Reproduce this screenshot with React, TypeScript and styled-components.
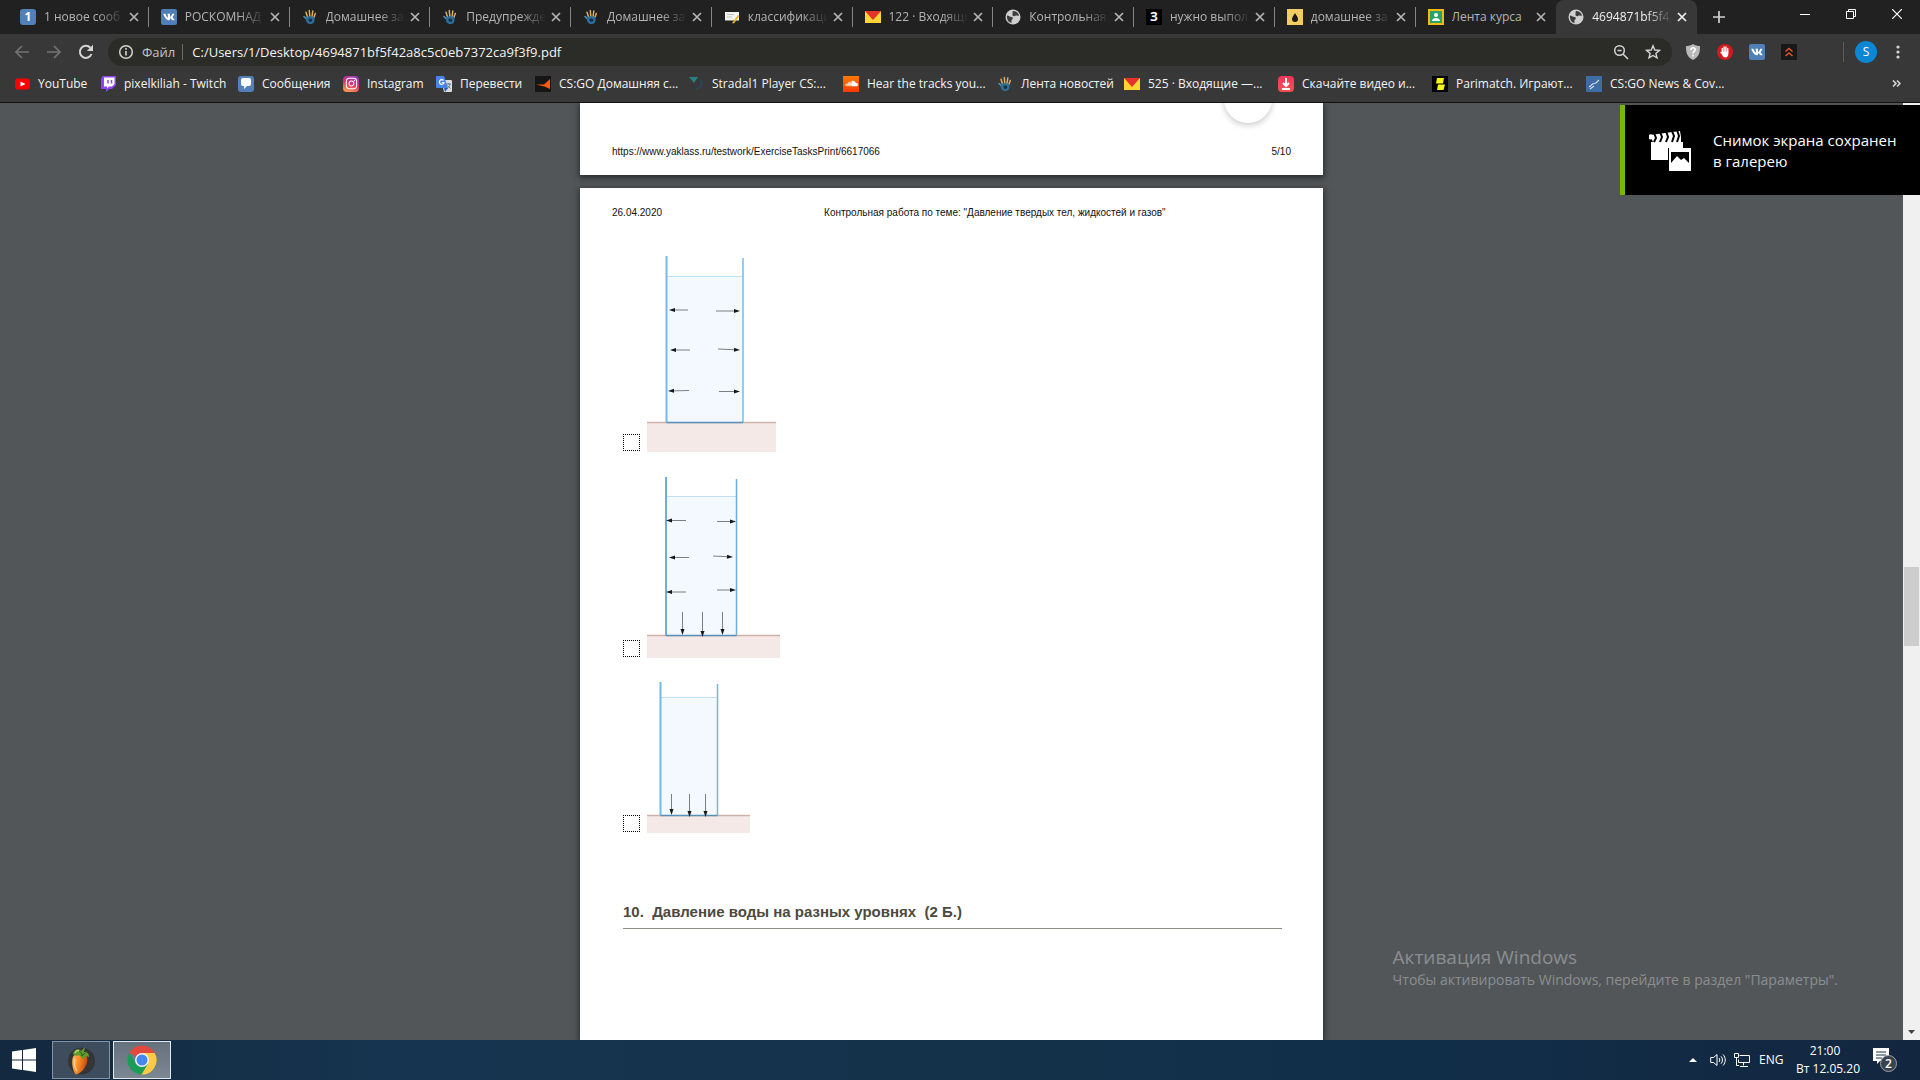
import React from "react";
import styled, { createGlobalStyle, css } from "styled-components";
import { FaVk, FaSoundcloud, FaInstagram } from "react-icons/fa";

const ui = `"Open Sans", "Noto Sans", sans-serif`;
const doc = `"Liberation Sans", Arial, sans-serif`;

const Global = createGlobalStyle`
  *, *::before, *::after { box-sizing: border-box; }
  html, body { margin: 0; height: 100%; }
  body { overflow: hidden; font-family: ${ui}; }
  button { border: 0; padding: 0; background: none; color: inherit; font: inherit; }
  svg { display: block; flex: none; }
`;

const Screen = styled.div`
  display: flex;
  flex-direction: column;
  height: 100vh;
  background: #525659;
`;

/* ---------- tab strip ---------- */
const TabStrip = styled.header`
  display: flex;
  flex: none;
  height: 34px;
  padding-left: 8px;
  background: #212121;
`;
const Tabs = styled.nav`
  display: flex;
  flex: 1;
  min-width: 0;
`;
const TabItem = styled.div<{ $active?: boolean; $line?: boolean }>`
  display: flex;
  flex: 1 1 0;
  align-items: center;
  min-width: 0;
  max-width: 240px;
  padding: 6px 7px 6px 12px;
  position: relative;
  color: ${(p) => (p.$active ? "#f1f1f1" : "#b4b4b4")};
  ${(p) =>
    p.$active &&
    css`
      background: #383838;
      border-radius: 8px 8px 0 0;
    `}
  ${(p) =>
    p.$line &&
    css`
      &::after {
        content: "";
        position: absolute;
        right: 0;
        top: 7px;
        width: 1px;
        height: 20px;
        background: #858585;
      }
    `}
`;
const TabTitle = styled.button<{ $fade: boolean }>`
  flex: 1;
  min-width: 0;
  margin: 0 2px 0 8px;
  overflow: hidden;
  font-size: 12px;
  line-height: 18px;
  text-align: left;
  white-space: nowrap;
  ${(p) =>
    p.$fade &&
    css`
      mask-image: linear-gradient(to right, #000 calc(100% - 26px), transparent);
    `}
`;
const IconButton = styled.button<{ $w: number; $h: number }>`
  display: flex;
  flex: none;
  align-items: center;
  justify-content: center;
  width: ${(p) => p.$w}px;
  height: ${(p) => p.$h}px;
`;
const NewTab = styled.div`
  display: flex;
  align-items: center;
  padding: 0 49px 0 8px;
  color: #d0d0d0;
`;
const WindowControls = styled.div`
  display: flex;
  color: #fff;
`;

/* ---------- toolbar ---------- */
const Toolbar = styled.div`
  display: flex;
  flex: none;
  align-items: center;
  height: 36px;
  padding: 0 6px;
  background: #383838;
  color: #d5d5d5;
`;
const Omnibox = styled.form`
  display: flex;
  flex: 1;
  align-items: center;
  height: 28px;
  margin: 0 5px 0 6px;
  padding: 0 3px 0 10px;
  border-radius: 14px;
  background: #2b2b27;
  font-size: 13px;
`;
const Scheme = styled.label`
  margin: 0 7px 0 8px;
  padding-right: 7px;
  border-right: 1px solid #6a6a68;
  line-height: 16px;
  color: #c4c4c4;
`;
const Address = styled.input`
  flex: 1;
  min-width: 0;
  padding: 0 0 0 2px;
  border: 0;
  outline: 0;
  background: transparent;
  color: #f4f4f4;
  font: 13px/18px ${ui};
`;
const Extensions = styled.div`
  display: flex;
  align-items: center;
  padding-right: 38px;
`;
const Profile = styled.div`
  display: flex;
  align-items: center;
  padding-left: 6px;
  border-left: 1px solid #5b5b5b;
`;
const Avatar = styled.span`
  width: 22px;
  height: 22px;
  border-radius: 50%;
  background: #0b87d3;
  color: #fff;
  font-size: 12px;
  line-height: 22px;
  text-align: center;
`;

/* ---------- bookmarks ---------- */
const Bookmarks = styled.nav`
  display: flex;
  flex: none;
  align-items: center;
  height: 33px;
  padding: 0 14px 5px;
  background: #383838;
  border-bottom: 1px solid #111;
`;
const Bookmark = styled.a<{ $w: number }>`
  display: flex;
  flex: 0 1 ${(p) => p.$w}px;
  align-items: center;
  gap: 8px;
  min-width: 0;
  color: #f4f4f4;
  font-size: 12px;
  line-height: 18px;
  text-decoration: none;
  white-space: nowrap;
`;
const Overflow = styled(IconButton)`
  margin-left: auto;
  color: #ddd;
`;

/* ---------- viewer ---------- */
const Viewer = styled.main`
  display: flex;
  flex: 1;
  min-height: 0;
  position: relative;
`;
const Canvas = styled.div`
  display: flex;
  flex: 1;
  flex-direction: column;
  align-items: center;
  gap: 13px;
  overflow: hidden;
  position: relative;
`;
const Page = styled.section<{ $grow?: boolean }>`
  display: flex;
  flex-direction: column;
  flex: ${(p) => (p.$grow ? "1" : "none")};
  width: 743px;
  padding: ${(p) => (p.$grow ? "19px 32px 0" : "43px 32px 18px")};
  background: #fff;
  box-shadow: 0 2px 6px 1px rgba(0, 0, 0, 0.5);
  color: #111;
  font-family: ${doc};
`;
const Running = styled.div`
  display: flex;
  justify-content: space-between;
  font-size: 10px;
  line-height: 11px;
`;
const RunningTitle = styled.span`
  flex: 1;
  padding-left: 162px;
`;
const Fab = styled.button`
  position: absolute;
  top: -28px;
  left: calc(50% + 272px);
  width: 48px;
  height: 48px;
  border-radius: 50%;
  background: #fff;
  box-shadow: 0 2px 6px rgba(0, 0, 0, 0.22);
`;
const Answers = styled.div`
  display: flex;
  flex-direction: column;
  gap: 22px;
  padding: 36px 0 0 11px;
`;
const Answer = styled.label`
  display: flex;
  align-items: flex-end;
  gap: 7px;
`;
const Tick = styled.input`
  appearance: none;
  width: 17px;
  height: 17px;
  margin: 0 0 1px;
  border: 1px dotted #000;
  background: #fff;
`;
const Question = styled.h2`
  margin: 70px 9px 0 11px;
  padding-bottom: 7px;
  border-bottom: 1px solid #8e8e88;
  color: #4c4a3e;
  font-size: 15px;
  line-height: 18px;
  white-space: pre;
`;
const Watermark = styled.aside`
  position: absolute;
  right: 65px;
  bottom: 50px;
  color: #8b8e90;
`;
const WatermarkTitle = styled.div`
  font-size: 19px;
  line-height: 26px;
`;
const WatermarkText = styled.div`
  font-size: 14px;
  line-height: 20px;
`;
const Toast = styled.aside`
  display: flex;
  align-items: center;
  gap: 22px;
  position: absolute;
  top: 2px;
  right: 0;
  width: 300px;
  height: 90px;
  padding-left: 24px;
  border-left: 5px solid #76b900;
  background: #000;
  color: #fff;
  font-size: 15px;
  line-height: 21px;
  white-space: nowrap;
`;
const ToastText = styled.span`
  padding-top: 2px;
`;
const Scrollbar = styled.div`
  display: flex;
  flex-direction: column;
  justify-content: space-between;
  align-items: center;
  width: 17px;
  background: #f0f0f0;
  color: #444;
`;
const Thumb = styled.div`
  width: 15px;
  height: 79px;
  margin-top: 86px;
  background: #cdcdcd;
`;

/* ---------- taskbar ---------- */
const Taskbar = styled.footer`
  display: flex;
  flex: none;
  align-items: center;
  height: 40px;
  background: linear-gradient(to right, #12293f, #16344f 20%, #15324b 50%, #112e49 75%, #13263f);
  color: #fff;
`;
const StartButton = styled(IconButton)`
  margin-right: 4px;
`;
const TaskButton = styled(IconButton)<{ $on?: boolean }>`
  margin-right: 3px;
  border: 1px solid ${(p) => (p.$on ? "#e4e8ec" : "#8394a5")};
  background: ${(p) => (p.$on ? "linear-gradient(#65727e, #7b8791)" : "#3d4d5d")};
`;
const Tray = styled.div`
  display: flex;
  align-items: center;
  margin-left: auto;
  padding-right: 23px;
  font-size: 12px;
  line-height: 18px;
`;
const Language = styled.span`
  width: 42px;
  padding-left: 5px;
`;
const Clock = styled.time`
  width: 58px;
  margin-right: 19px;
  text-align: center;
  white-space: nowrap;
`;

/* ---------- icons ---------- */
const Tile = styled.span<{ $bg: string; $r?: number; $fs?: number }>`
  display: flex;
  flex: none;
  align-items: center;
  justify-content: center;
  width: 16px;
  height: 16px;
  border-radius: ${(p) => p.$r ?? 0}px;
  background: ${(p) => p.$bg};
  color: #fff;
  font-size: ${(p) => p.$fs ?? 12}px;
  font-weight: 700;
  line-height: 16px;
`;

const Svg = ({ s = 16, children }: { s?: number; children: React.ReactNode }) => (
  <svg width={s} height={s} viewBox={`0 0 ${s} ${s}`} fill="none" aria-hidden="true">
    {children}
  </svg>
);

const Hand = () => (
  <Svg>
    <path d="M5.500 8 4 3.200M7.800 7.500 7.300 1.500M10 7.500 10.800 2M11.800 8.500 13.300 4.500" stroke="#dcae68" strokeWidth="1.500" strokeLinecap="round" />
    <path d="M4.500 10 2 7.500" stroke="#4c93bd" strokeWidth="1.600" strokeLinecap="round" />
    <path d="M4.300 8C6 6.800 10.500 6.800 12.300 8.500c.8 2.500.2 4.800-1.600 6C8.500 15.800 5.500 15 4.300 12.500 3.700 11 3.600 9.500 4.300 8Z" fill="#2e6c99" />
    <path d="M6.200 10.500c1-1.500 3.600-1.300 4 .3.300 1.600-1.400 2.500-2.600 2.200" fill="#16324a" />
  </Svg>
);
const Mail = () => (
  <Svg>
    <path d="M0 2h16v12H0z" fill="#ffd633" />
    <path d="M0 2h16L8 11Z" fill="#e5322d" />
  </Svg>
);
const Globe = () => (
  <Svg>
    <circle cx="8" cy="8" r="7.500" fill="#cfcfcf" />
    <path d="M2 6.500c2 0 2.500 1.500 4.500 1.500s1.500 2.500 0 3v3C3.500 13.500 1.500 10.500 2 6.500ZM8 2c3-.5 5.500 2 6 4.500-1.500.8-2.500-.5-4 .5S7 6.500 7.500 5 7 3 8 2Z" fill="#3c3c3c" />
  </Svg>
);
const Note = () => (
  <Svg>
    <path d="M1 3h14v8.500H1z" fill="#f3f3f0" />
    <path d="M3 5.500h7M3 8h5" stroke="#c5c5c0" />
    <path d="m8 14 6-8 1.500 1-5.500 7.500Z" fill="#e6b422" />
  </Svg>
);
const Drop = () => (
  <Tile $bg="#f4cc62">
    <svg width="6" height="9" viewBox="0 0 6 9"><path d="M3 0C4 2 6 4 6 6a3 3 0 0 1-6 0C0 4 2 2 3 0Z" fill="#1a1a1a" /></svg>
  </Tile>
);
const Classroom = () => (
  <Svg>
    <path d="M0 0h16v16H0z" fill="#f5ba14" />
    <path d="M2 2h12v12H2z" fill="#25a465" />
    <circle cx="8" cy="6" r="2" fill="#fff" />
    <path d="M4 12c0-4 8-4 8 0Z" fill="#fff" />
  </Svg>
);
const YouTube = () => (
  <Svg>
    <rect x="1" y="2.500" width="15" height="11" rx="3" fill="#f00" />
    <path d="m6.500 5.500 5 2.500-5 2.500Z" fill="#fff" />
  </Svg>
);
const Twitch = () => (
  <Svg>
    <path d="M2.500 0H16v9l-4 4H9l-3 3v-3H1V3Z" fill="#8b44f7" />
    <path d="M4 1.500h10.500V8L12 10.500H9L7 12.500v-2H4Z" fill="#fff" />
    <path d="M8 4v3.500M11.500 4v3.500" stroke="#8b44f7" strokeWidth="1.500" />
  </Svg>
);
const Chat = () => (
  <Tile $bg="#5181b8" $r={3}>
    <svg width="10" height="11" viewBox="0 0 10 11"><path d="M2 0h6a2 2 0 0 1 2 2v4a2 2 0 0 1-2 2H6l-3 3V8H2a2 2 0 0 1-2-2V2a2 2 0 0 1 2-2Z" fill="#fff" /></svg>
  </Tile>
);
const Translate = () => (
  <Svg>
    <path d="M5 4h10a1 1 0 0 1 1 1v10a1 1 0 0 1-1 1H8Z" fill="#dcdcdc" />
    <path d="M0 1a1 1 0 0 1 1-1h7l4 12H1a1 1 0 0 1-1-1Z" fill="#4a86e8" />
    <path d="M7.500 4.500A2.300 2.300 0 1 0 8 6.500H5.800" stroke="#fff" strokeWidth="1.200" />
    <path d="M10 8h5M12.500 7v1M14 8c-.5 2-1.500 3.500-3 4.500M11.500 9.500l3 3" stroke="#607d8b" />
    <path d="m8 12 4 0-3 4Z" fill="#2b5fc0" />
  </Svg>
);
const Faceit = () => (
  <Tile $bg="#161616">
    <svg width="14" height="10" viewBox="0 0 14 10"><path d="M0 5.500h8L14 0v10L8.500 7.500Z" fill="#ff5a0a" /></svg>
  </Tile>
);
const Stradal = () => (
  <Svg>
    <path d="M1 1h9L6 7Z" fill="#238285" />
    <path d="M13 4c2 4 0 8-5 9" stroke="#29475a" strokeWidth="2" />
  </Svg>
);
const Download = () => (
  <Tile $bg="linear-gradient(#f6335a, #f25252)" $r={4}>
    <svg width="10" height="12" viewBox="0 0 10 12" fill="none" stroke="#fff" strokeWidth="2"><path d="M5 0v7M2 5l3 3 3-3M1 11h8" /></svg>
  </Tile>
);
const Pari = () => (
  <Tile $bg="#000">
    <svg width="12" height="12" viewBox="0 0 12 12"><path d="M3 0h7L9 5.500H2ZM4 6.500h7L9.500 12H3Z" fill="#f6f41c" /></svg>
  </Tile>
);
const News = () => (
  <Tile $bg="#3e6ca5">
    <svg width="12" height="12" viewBox="0 0 12 12" fill="none" stroke="#d6e2ef"><path d="M1 8.500C3 9.500 3 5.500 6 5.500S9 3.500 11 2M2 11l4-3" strokeWidth="1.100" /></svg>
  </Tile>
);
const VkTile = () => (
  <Tile $bg="#4f7fb5" $r={2}>
    <FaVk size={12} />
  </Tile>
);
const Chrome = () => (
  <Svg s={30}>
    <path d="M15 15 2.400 7.800A14.500 14.500 0 0 1 27.700 8H15Z" fill="#e04a3f" />
    <path d="M15 8h12.700A14.500 14.500 0 0 1 14.400 29.500L21 18.500Z" fill="#fccb45" />
    <path d="M2.400 7.800A14.500 14.500 0 0 0 14.400 29.500L20.700 19 15 21 9 18.500Z" fill="#1b9d57" />
    <circle cx="15" cy="15" r="7" fill="#f1f1f1" />
    <circle cx="15" cy="15" r="5.500" fill="#4688f1" />
  </Svg>
);
const FruityLoops = () => (
  <Svg s={30}>
    <defs>
      <linearGradient id="fruit" x1="0" y1="0" x2="1" y2="0.300">
        <stop offset="0" stopColor="#ffc061" />
        <stop offset="0.600" stopColor="#f2801f" />
        <stop offset="1" stopColor="#c34c10" />
      </linearGradient>
    </defs>
    <circle cx="15.500" cy="16" r="13.500" fill="#343536" />
    <path d="M7 12c1-4 11-4 14 0 2 6-4 16-11 17.500C7 27 5 17 7 12Z" fill="url(#fruit)" />
    <path d="M9 14c-1 4 0 9 2 12" stroke="#ffe0a8" strokeWidth="1.500" opacity=".7" />
    <path d="M7 9c1-5 6-6 8-3l4-4-1 5c3 0 5 1 5 5-3-1-5 0-6 2-2-1-2-3-4-4-2 1-5 1-6-1Z" fill="#5f9a2d" />
    <path d="M9 8c1-2 3-3 4-2" stroke="#b9d873" strokeWidth="1.500" />
    <path d="M13 6c2 1 3 2 3 5l3-3" stroke="#2c5d18" />
  </Svg>
);
const Close = () => (
  <Svg s={10}><path d="m1 1 8 8M9 1 1 9" stroke="currentColor" strokeWidth="1.700" /></Svg>
);

/* ---------- vessel drawings ---------- */
type Arrow = [number, number, number, number];
type Vessel = {
  w: number; h: number; floor: number;
  left: number; right: number; topL: number; topR: number; water: number;
  wall: string; arrows: Arrow[];
};
const vessels: Vessel[] = [
  {
    w: 129, h: 198, floor: 168.5, left: 19.5, right: 96, topL: 2, topR: 4, water: 22, wall: "#72bbf0",
    arrows: [[41, 56, 22, 56], [69, 57, 93, 57], [43, 96, 23, 96], [71, 95, 93, 96], [42, 136.5, 21, 137], [72, 137.500, 93, 137.500]],
  },
  {
    w: 133, h: 184, floor: 161.5, left: 19, right: 89.5, topL: 3, topR: 5, water: 22, wall: "#69b0dc",
    arrows: [[39, 46.500, 19, 46.500], [70, 47.500, 89, 47.500], [42, 83.500, 22, 83.500], [66, 82, 86, 83], [39, 118, 19, 118], [70, 116, 89, 116], [35.500, 138, 35.500, 161], [55.500, 138, 55.500, 163], [75.500, 138, 75.500, 161]],
  },
  {
    w: 103, h: 153, floor: 135.5, left: 13.5, right: 70.5, topL: 2, topR: 4, water: 17, wall: "#6cbbe2",
    arrows: [[24.500, 114, 24.500, 135], [42.500, 114, 42.500, 137], [58.500, 114, 58.500, 137]],
  },
];
const ArrowLine = ({ a: [x1, y1, x2, y2] }: { a: Arrow }) => {
  const d = Math.hypot(x2 - x1, y2 - y1);
  const ux = (x2 - x1) / d;
  const uy = (y2 - y1) / d;
  const bx = x2 - ux * 6;
  const by = y2 - uy * 6;
  return (
    <g>
      <path d={`M${x1} ${y1}L${bx} ${by}`} stroke="#7c7f82" />
      <path d={`M${x2} ${y2}L${bx - uy * 2} ${by + ux * 2}L${bx + uy * 2} ${by - ux * 2}Z`} fill="#16191c" />
    </g>
  );
};
const VesselDrawing = ({ v }: { v: Vessel }) => (
  <svg width={v.w} height={v.h} viewBox={`0 0 ${v.w} ${v.h}`} fill="none" role="img" aria-label="Сосуд">
    <path d={`M0 ${v.floor}H${v.w}V${v.h}H0Z`} fill="#f4e9e6" />
    <path d={`M0 ${v.floor}H${v.w}`} stroke="#cfb3aa" strokeWidth="1.500" />
    <path d={`M${v.left} ${v.water}H${v.right}V${v.floor}H${v.left}Z`} fill="#f3f9fe" />
    <path d={`M${v.left} ${v.water + 0.5}H${v.right}`} stroke="#c0e0f5" />
    <path d={`M${v.left} ${v.topL}V${v.floor}`} stroke={v.wall} strokeWidth="2" />
    <path d={`M${v.right} ${v.topR}V${v.floor}`} stroke={v.wall} strokeWidth="1.500" />
    <path d={`M${v.left} ${v.floor}H${v.right}`} stroke="#5a8fb8" strokeWidth="1.500" />
    {v.arrows.map((a, i) => <ArrowLine key={i} a={a} />)}
  </svg>
);

const tabs: [string, React.ReactNode][] = [
  ["1 новое сооб", <Tile $bg="#5181b8" $r={3}>1</Tile>],
  ["РОСКОМНАД", <VkTile />],
  ["Домашнее за", <Hand />],
  ["Предупрежде", <Hand />],
  ["Домашнее за", <Hand />],
  ["классификаци", <Note />],
  ["122 · Входящи", <Mail />],
  ["Контрольная", <Globe />],
  ["нужно выпол", <Tile $bg="#000">З</Tile>],
  ["домашнее за", <Drop />],
  ["Лента курса", <Classroom />],
  ["4694871bf5f4", <Globe />],
];

const bookmarks: [string, number, React.ReactNode][] = [
  ["YouTube", 86, <YouTube />],
  ["pixelkiliah - Twitch", 138, <Twitch />],
  ["Сообщения", 105, <Chat />],
  ["Instagram", 93, <Tile $bg="linear-gradient(200deg, #8a3ac8, #e0306e 50%, #fdb34b)" $r={4}><FaInstagram size={13} /></Tile>],
  ["Перевести", 99, <Translate />],
  ["CS:GO Домашняя с...", 153, <Faceit />],
  ["Stradal1 Player CS:...", 155, <Stradal />],
  ["Hear the tracks you...", 154, <Tile $bg="linear-gradient(#ff7a00, #ff3a00)"><FaSoundcloud size={13} /></Tile>],
  ["Лента новостей", 127, <Hand />],
  ["525 · Входящие —...", 154, <Mail />],
  ["Скачайте видео и...", 154, <Download />],
  ["Parimatch. Играют...", 154, <Pari />],
  ["CS:GO News & Cov...", 154, <News />],
];

export default function App() {
  return (
    <Screen>
      <Global />
      <TabStrip>
        <Tabs aria-label="Вкладки">
          {tabs.map(([title, icon], i) => (
            <TabItem key={i} $active={i === 11} $line={i < 10}>
              {icon}
              <TabTitle $fade={i !== 10}>{title}</TabTitle>
              <IconButton $w={16} $h={16} aria-label="Закрыть вкладку"><Close /></IconButton>
            </TabItem>
          ))}
        </Tabs>
        <NewTab>
          <IconButton $w={28} $h={28} aria-label="Новая вкладка">
            <Svg s={12}><path d="M6 0v12M0 6h12" stroke="currentColor" strokeWidth="1.700" /></Svg>
          </IconButton>
        </NewTab>
        <WindowControls>
          <IconButton $w={46} $h={28} aria-label="Свернуть"><Svg s={10}><path d="M0 5.500h10" stroke="currentColor" /></Svg></IconButton>
          <IconButton $w={46} $h={28} aria-label="Восстановить"><Svg s={10}><path d="M.5 2.500h7v7h-7ZM2.500 2.500v-2h7v7h-2" stroke="currentColor" /></Svg></IconButton>
          <IconButton $w={46} $h={28} aria-label="Закрыть"><Svg s={10}><path d="m0 0 10 10M10 0 0 10" stroke="currentColor" strokeWidth="1.200" /></Svg></IconButton>
        </WindowControls>
      </TabStrip>

      <Toolbar>
        <IconButton $w={32} $h={28} aria-label="Назад"><Svg><path d="M15 8H2M8 2 2 8l6 6" stroke="#737373" strokeWidth="1.700" /></Svg></IconButton>
        <IconButton $w={32} $h={28} aria-label="Вперёд"><Svg><path d="M1 8h13M8 2l6 6-6 6" stroke="#737373" strokeWidth="1.700" /></Svg></IconButton>
        <IconButton $w={32} $h={28} aria-label="Обновить"><Svg><path d="M13.500 10A6 6 0 1 1 12.300 3.800" stroke="currentColor" strokeWidth="2" /><path d="M15 .8v6.200H8.800Z" fill="currentColor" /></Svg></IconButton>
        <Omnibox>
          <Svg><circle cx="8" cy="8" r="6.300" stroke="currentColor" strokeWidth="1.500" /><path d="M8 7v4.500M8 4v1.700" stroke="currentColor" strokeWidth="1.600" /></Svg>
          <Scheme htmlFor="address">Файл</Scheme>
          <Address id="address" defaultValue="C:/Users/1/Desktop/4694871bf5f42a8c5c0eb7372ca9f3f9.pdf" />
          <IconButton type="button" $w={32} $h={28} aria-label="Масштаб"><Svg><circle cx="6.500" cy="6.500" r="4.800" stroke="currentColor" strokeWidth="1.500" /><path d="m10 10 5 5M4.500 6.500h4" stroke="currentColor" strokeWidth="1.500" /></Svg></IconButton>
          <IconButton type="button" $w={32} $h={28} aria-label="В закладки"><Svg><path d="m8 1.800 1.800 4.200 4.600.4-3.500 3 1.100 4.500-4-2.400-4 2.400 1.100-4.500-3.500-3L6.200 6Z" stroke="currentColor" strokeWidth="1.400" /></Svg></IconButton>
        </Omnibox>
        <Extensions>
          <IconButton $w={32} $h={28} aria-label="Защита">
            <Svg><path d="M8 0c2 1.500 4.500 2 7 2 0 7-1 11-7 14C2 13 1 9 1 2c2.500 0 5-.5 7-2Z" fill="#b9b9b9" /><path d="M5.800 6c0-3 4.600-2.800 4.400 0-.2 1.500-2.200 1.500-2.200 3.200M8 10.800v1.700" stroke="#fff" strokeWidth="1.600" /></Svg>
          </IconButton>
          <IconButton $w={32} $h={28} aria-label="Блокировщик">
            <Svg><circle cx="8" cy="8" r="8" fill="#d21a1f" /><path d="M5.300 8V4.500M7.100 7.500V3M8.900 7.500V3M10.700 8V4.500M5.500 10 4 8.500" stroke="#fff" strokeWidth="1.400" strokeLinecap="round" /><path d="M4.600 7.500h6.800V10c0 4-4.500 4.500-6 1.500Z" fill="#fff" /></Svg>
          </IconButton>
          <IconButton $w={32} $h={28} aria-label="VK"><VkTile /></IconButton>
          <IconButton $w={32} $h={28} aria-label="Расширение">
            <Svg><path d="M0 0h16v16H0z" fill="#181818" /><path d="m4.500 7.500 3.500-3 3.500 3M4.500 12 8 9l3.500 3" stroke="#e8552f" strokeWidth="1.500" /></Svg>
          </IconButton>
        </Extensions>
        <Profile>
          <IconButton $w={32} $h={20} aria-label="Профиль"><Avatar>S</Avatar></IconButton>
          <IconButton $w={32} $h={20} aria-label="Меню">
            <Svg><g fill="currentColor"><circle cx="8" cy="3" r="1.600" /><circle cx="8" cy="8" r="1.600" /><circle cx="8" cy="13" r="1.600" /></g></Svg>
          </IconButton>
        </Profile>
      </Toolbar>

      <Bookmarks aria-label="Закладки">
        {bookmarks.map(([name, w, icon]) => (
          <Bookmark key={name} href="#" $w={w}>{icon}{name}</Bookmark>
        ))}
        <Overflow $w={20} $h={20} aria-label="Другие закладки">
          <Svg s={9}><path d="m1 1.500 3 3-3 3M5 1.500l3 3-3 3" stroke="currentColor" strokeWidth="1.500" /></Svg>
        </Overflow>
      </Bookmarks>

      <Viewer>
        <Canvas>
          <Page>
            <Running><span>https://www.yaklass.ru/testwork/ExerciseTasksPrint/6617066</span><span>5/10</span></Running>
          </Page>
          <Page $grow>
            <Running>
              <span>26.04.2020</span>
              <RunningTitle>Контрольная работа по теме: "Давление твердых тел, жидкостей и газов"</RunningTitle>
            </Running>
            <Answers>
              {vessels.map((v, i) => (
                <Answer key={i}><Tick type="checkbox" /><VesselDrawing v={v} /></Answer>
              ))}
            </Answers>
            <Question>{"10.  Давление воды на разных уровнях  (2 Б.)"}</Question>
          </Page>
          <Fab aria-label="По размеру страницы" />
          <Watermark>
            <WatermarkTitle>Активация Windows</WatermarkTitle>
            <WatermarkText>Чтобы активировать Windows, перейдите в раздел "Параметры".</WatermarkText>
          </Watermark>
        </Canvas>
        <Scrollbar>
          <span />
          <Thumb />
          <IconButton $w={17} $h={17} aria-label="Вниз"><svg width="7" height="4" viewBox="0 0 7 4"><path d="M0 0h7L3.500 4Z" fill="currentColor" /></svg></IconButton>
        </Scrollbar>
        <Toast role="status">
          <svg width="42" height="41" viewBox="0 0 42 41" fill="none">
            <path d="M2 12h32v18H2z" fill="#fff" />
            <path d="m1 5 30-4 1 6v5H4Z" fill="#fff" />
            <path d="m5 3 2 5-2 4M11 2l2 5-2 5M17 1l2 6-2 5M23 1l2 5-2 6M28 0l2 6-2 6" stroke="#000" strokeWidth="2" />
            <path d="M0 5c2-2 4 0 4 2s-2 3-4 2Z" fill="#fff" />
            <path d="M19 18h23v23H19z" fill="#000" />
            <path d="M20 18h22v23H20z" fill="#fff" />
            <path d="M22 22h18v12H22z" fill="#000" />
            <path d="m22 33 6-7 4 4 3-2 5 5v2H22Z" fill="#fff" />
          </svg>
          <ToastText>Снимок экрана сохранен<br />в галерею</ToastText>
        </Toast>
      </Viewer>

      <Taskbar>
        <StartButton $w={48} $h={40} aria-label="Пуск">
          <Svg s={24}><path d="m0 3.500 10-1.400v9.400H0ZM11 2l13-2v11.500H11ZM0 12.500h10v9.400L0 20.500ZM11 12.500h13V24l-13-2Z" fill="#fff" /></Svg>
        </StartButton>
        <TaskButton $w={58} $h={38} aria-label="FL Studio"><FruityLoops /></TaskButton>
        <TaskButton $w={58} $h={38} $on aria-label="Chrome"><Chrome /></TaskButton>
        <Tray>
          <IconButton $w={26} $h={40} aria-label="Скрытые значки"><svg width="8" height="4" viewBox="0 0 8 4"><path d="M0 4h8L4 0Z" fill="#fff" /></svg></IconButton>
          <IconButton $w={24} $h={40} aria-label="Громкость"><Svg><path d="M.7 5.500h2.800L7 2.500v11l-3.500-3H.7ZM9 6c1 1.200 1 2.800 0 4M11 4.300c2 2 2 5.400 0 7.400M13 2.500c3 3 3 8 0 11" stroke="#fff" /></Svg></IconButton>
          <IconButton $w={24} $h={40} aria-label="Сеть"><Svg><path d="M5.500 3.500h10v7H4.500V7.500M9.500 10.500v3M6 14.500h8M.5 1.500h4v4h-4ZM2.500 5.500v8H5" stroke="#fff" /></Svg></IconButton>
          <Language>ENG</Language>
          <Clock>21:00<br />Вт 12.05.20</Clock>
          <IconButton $w={24} $h={24} aria-label="Уведомления: 2">
            <svg width="24" height="24" viewBox="0 0 24 24">
              <path d="M0 0h16v13H7l-3 3v-3H0Z" fill="#fff" />
              <path d="M3 4h10M3 7h10M3 10h6" stroke="#17324b" />
              <circle cx="15.500" cy="15.500" r="8" fill="#39434d" stroke="#9aa3ab" />
              <text x="15.500" y="20" textAnchor="middle" fontSize="12" fontWeight="600" fill="#fff">2</text>
            </svg>
          </IconButton>
        </Tray>
      </Taskbar>
    </Screen>
  );
}
